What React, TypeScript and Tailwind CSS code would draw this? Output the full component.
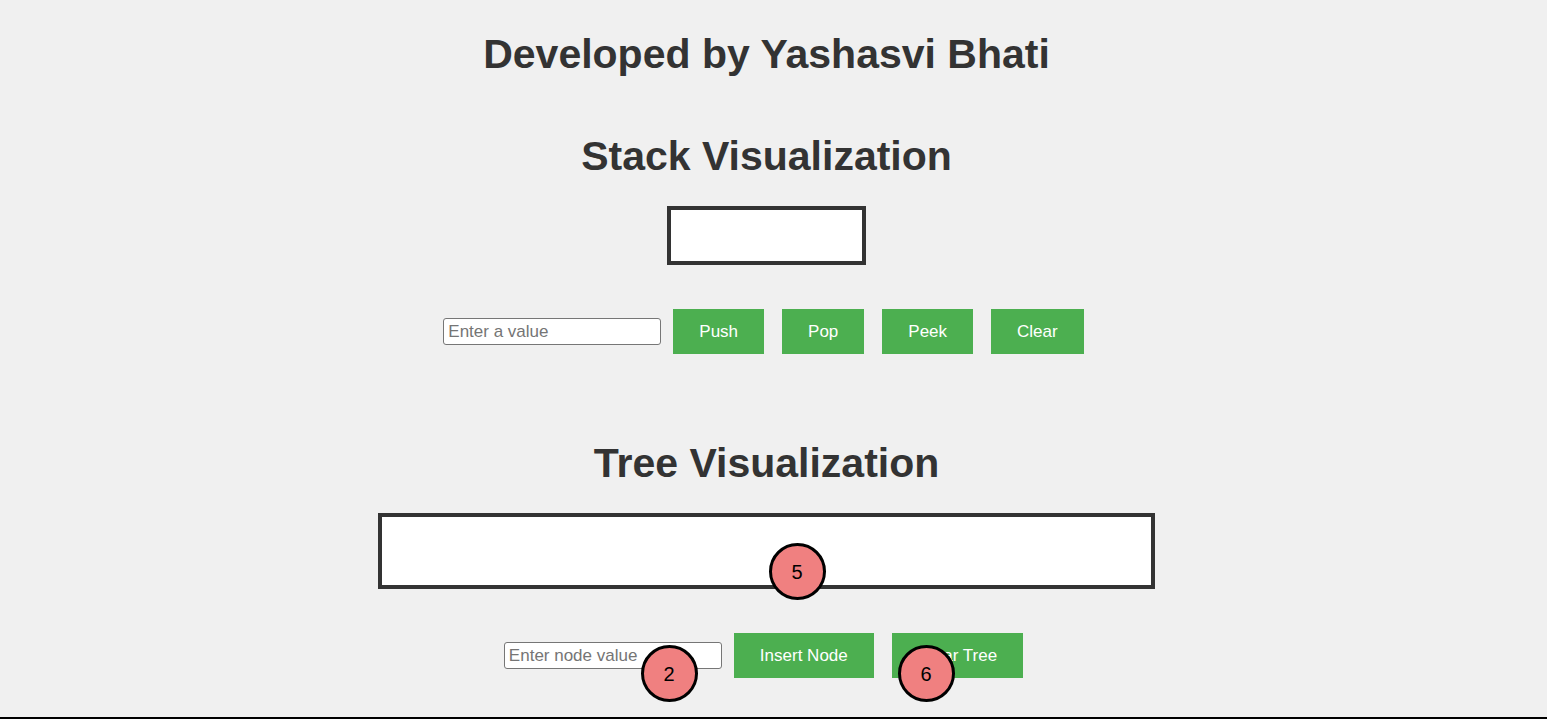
import type { ButtonHTMLAttributes, InputHTMLAttributes, ReactNode } from "react";

function Heading({ children }: { children: ReactNode }) {
  return (
    <h1 className="text-center text-[41px] leading-[46px] font-bold text-[#333333]">
      {children}
    </h1>
  );
}

function ValueInput(props: InputHTMLAttributes<HTMLInputElement>) {
  return (
    <input
      type="text"
      className="h-[27px] w-[218px] rounded-[3px] border border-[#767676] bg-white px-1 text-[17px] leading-5 text-black placeholder:text-[#757575]"
      {...props}
    />
  );
}

function ActionButton(props: ButtonHTMLAttributes<HTMLButtonElement>) {
  return (
    <button
      type="button"
      className="mx-1.5 h-[45px] cursor-pointer bg-[#4caf50] px-[26px] text-[17px] leading-5 text-white"
      {...props}
    />
  );
}

function Controls({ children }: { children: ReactNode }) {
  return (
    <div className="mt-11 flex flex-wrap items-center justify-center gap-1.5">{children}</div>
  );
}

const nodes = [
  { value: 5, place: "top-[103px] left-[calc(50%+2px)]" },
  { value: 2, place: "top-[205px] left-[calc(50%-126px)]" },
  { value: 6, place: "top-[205px] left-[calc(50%+131px)]" },
];

export default function App() {
  return (
    <div className="min-h-screen bg-[#f0f0f0] font-['Liberation_Sans',Arial,sans-serif]">
      <main className="border-b-2 border-black pt-[31px] pr-3.5 pb-[39px]">
        <Heading>Developed by Yashasvi Bhati</Heading>

        <section className="mt-14">
          <Heading>Stack Visualization</Heading>
          <div className="mx-auto mt-[27px] h-[59px] w-[199px] border-4 border-[#333333] bg-white" />
          <Controls>
            <ValueInput placeholder="Enter a value" aria-label="Enter a value" />
            <ActionButton>Push</ActionButton>
            <ActionButton>Pop</ActionButton>
            <ActionButton>Peek</ActionButton>
            <ActionButton>Clear</ActionButton>
          </Controls>
        </section>

        <section className="relative mt-[86px]">
          <Heading>Tree Visualization</Heading>
          <div className="mx-auto mt-[27px] h-[76px] w-full max-w-[777px] border-4 border-[#333333] bg-white" />
          <Controls>
            <ValueInput placeholder="Enter node value" aria-label="Enter node value" />
            <ActionButton>Insert Node</ActionButton>
            <ActionButton>Clear Tree</ActionButton>
          </Controls>
          {nodes.map((node) => (
            <div
              key={node.value}
              className={`absolute flex size-[57px] items-center justify-center rounded-full border-3 border-black bg-[#f08080] text-[20px] leading-6 text-black ${node.place}`}
            >
              {node.value}
            </div>
          ))}
        </section>
      </main>
    </div>
  );
}
